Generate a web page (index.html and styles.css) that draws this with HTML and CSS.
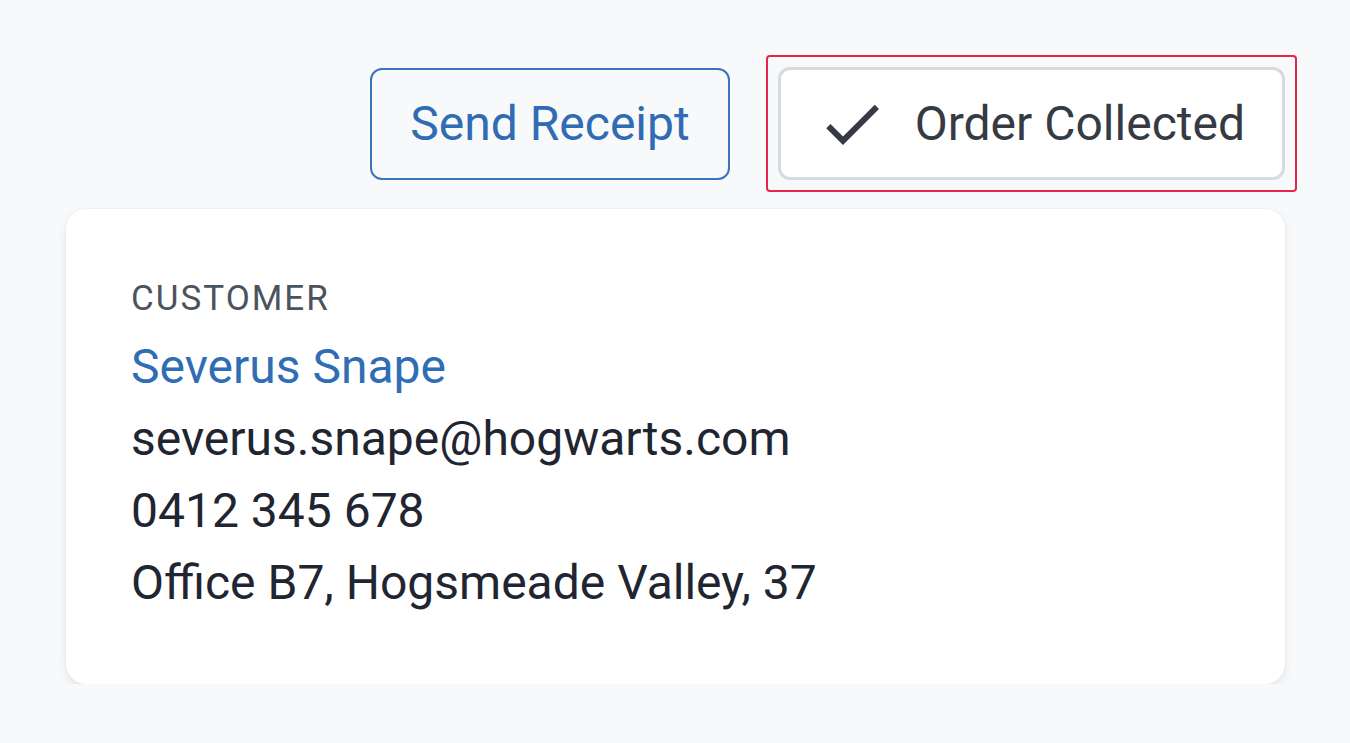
FILE: index.html
```html
<!DOCTYPE html>
<html lang="en">
<head>
<meta charset="utf-8">
<title>Order</title>
<link rel="stylesheet" href="styles.css">
</head>
<body>
<main class="page">
  <div class="actions">
    <button class="btn btn-outline" type="button">Send Receipt</button>
    <span class="focus-ring">
      <button class="btn btn-secondary" type="button">
        <svg class="icon" viewBox="0 0 24 24" width="72" height="72" aria-hidden="true"><path d="M9 16.17L4.83 12l-1.42 1.41L9 19 21 7l-1.41-1.41z"/></svg>
        <span>Order Collected</span>
      </button>
    </span>
  </div>
  <section class="card">
    <div class="label">CUSTOMER</div>
    <div class="name">Severus Snape</div>
    <div class="line">severus.snape@hogwarts.com</div>
    <div class="line">0412 345 678</div>
    <div class="line">Office B7, Hogsmeade Valley, 37</div>
  </section>
</main>
</body>
</html>
```
FILE: styles.css
```css
html, body {
  margin: 0;
  padding: 0;
  background: #f8f9fb;
  font-family: Roboto, "Liberation Sans", sans-serif;
}

.page {
  padding: 67px 65px 0 66px;
}

.actions {
  display: flex;
  justify-content: flex-end;
  align-items: center;
  gap: 47px;
  margin-bottom: 29px;
}

.btn {
  font-family: Roboto, "Liberation Sans", sans-serif;
  font-size: 48px;
  display: flex;
  align-items: center;
  box-sizing: border-box;
  border-radius: 12px;
  cursor: pointer;
  line-height: 1;
}

.btn-outline {
  height: 112px;
  padding: 0 38px;
  border: 2px solid #3b74ba;
  background: transparent;
  color: #2f6cb3;
}

.focus-ring {
  display: flex;
  margin: -12px -12px -12px -11px;
  padding: 10px;
  border: 2px solid #e3264a;
  border-radius: 4px;
}

.btn-secondary {
  height: 113px;
  padding: 0 37px 0 35px;
  border: 3px solid #d6dbe0;
  background: #ffffff;
  color: #363a43;
  gap: 27px;
}

.icon {
  fill: #363a43;
  flex: none;
}

.card {
  background: #ffffff;
  border-radius: 20px;
  padding: 64px 65px 65px;
  box-shadow: 0 4px 10px rgba(0, 0, 0, 0.08), 0 0 0 1px rgba(0, 0, 0, 0.025);
}

.label {
  font-size: 35px;
  line-height: 52px;
  letter-spacing: 2px;
  color: #4b5360;
  margin-bottom: 6px;
}

.name {
  font-size: 48px;
  line-height: 72px;
  color: #2f6db5;
}

.line {
  font-size: 48px;
  line-height: 72px;
  color: #1f2531;
}
```
